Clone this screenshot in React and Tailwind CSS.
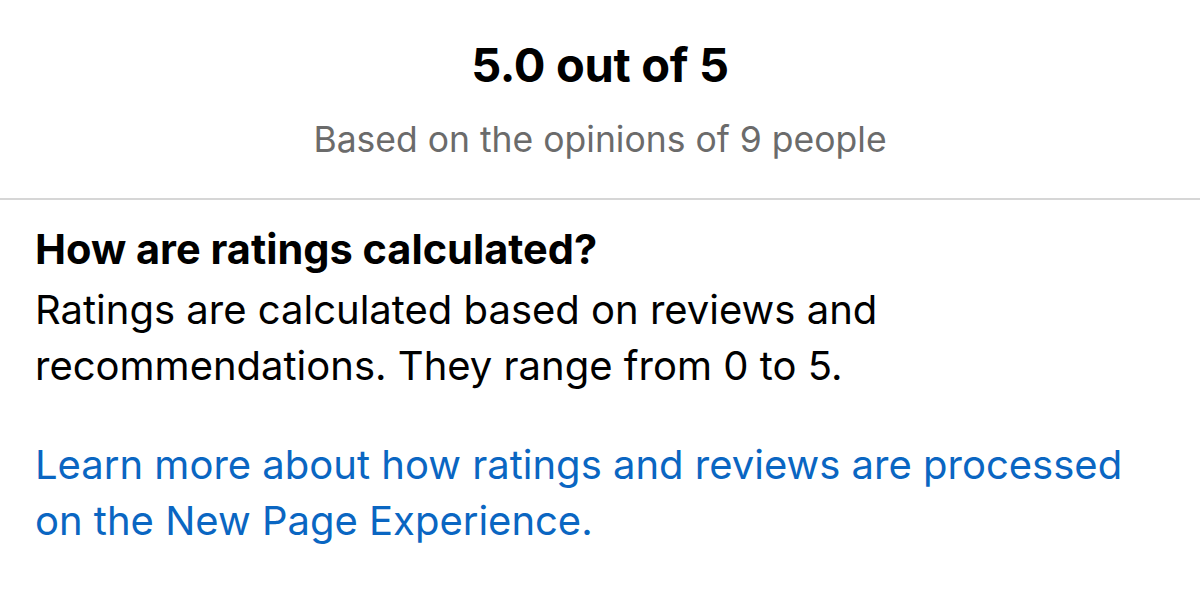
export default function App() {
  return (
    <div
      className="w-[1200px] h-[602px] bg-white overflow-hidden text-black"
      style={{ fontFamily: "Inter, 'Noto Sans', sans-serif" }}
    >
      {/* Rating summary */}
      <div className="pt-[37px] pb-[38px] text-center border-b-2 border-[#d6d6d6]">
        <h1 className="text-[47px] leading-[56px] font-bold tracking-[-0.3px]">5.0 out of 5</h1>
        <p className="mt-[27px] text-[35.5px] leading-[40px] text-[#6b6b6b]">
          Based on the opinions of 9 people
        </p>
      </div>

      {/* Explanation */}
      <div className="px-[35px]">
        <h2 className="mt-[25px] text-[41.5px] leading-[48px] font-bold">
          How are ratings calculated?
        </h2>
        <p className="mt-[9px] text-[40px] leading-[56px] w-[900px]">
          Ratings are calculated based on reviews and recommendations. They range from 0 to 5.
        </p>
        <p className="mt-[43px] text-[40px] leading-[56px] text-[#0a66c2]">
          Learn more about how ratings and reviews are processed on the New Page Experience.
        </p>
      </div>
    </div>
  );
}
